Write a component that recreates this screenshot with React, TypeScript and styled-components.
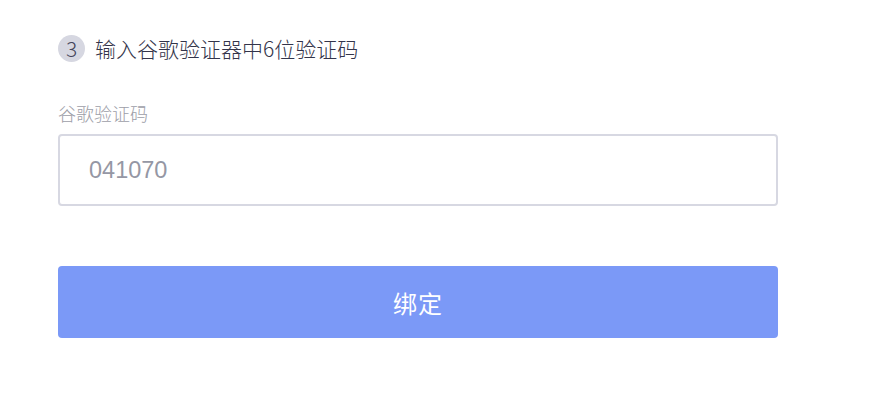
import React, { useState } from 'react';
import styled, { createGlobalStyle } from 'styled-components';

const GlobalStyle = createGlobalStyle`
  html, body {
    margin: 0;
    padding: 0;
    background: #fff;
    font-family: "Noto Sans CJK SC", "Noto Sans", sans-serif;
  }
`;

const Page = styled.div`
  width: 874px;
  height: 395px;
  box-sizing: border-box;
  padding: 34px 0 0 58px;
`;

const Step = styled.div`
  display: flex;
  align-items: center;
  gap: 10px;
  height: 28px;
`;

const StepNum = styled.span`
  width: 27px;
  height: 27px;
  border-radius: 50%;
  background: #d6d7e1;
  color: #44455a;
  font-size: 21px;
  font-weight: 300;
  line-height: 1;
  display: flex;
  align-items: center;
  justify-content: center;
`;

const StepText = styled.span`
  font-size: 21px;
  font-weight: 300;
  color: #33344a;
`;

const Field = styled.div`
  margin-top: 40px;
  width: 720px;
  display: flex;
  flex-direction: column;
`;

const Label = styled.label`
  font-size: 18px;
  font-weight: 300;
  line-height: 22px;
  color: #9d9ea8;
  margin-bottom: 10px;
`;

const Input = styled.input`
  box-sizing: border-box;
  width: 720px;
  height: 72px;
  border: 2px solid #d7d8e2;
  border-radius: 4px;
  padding: 0 29px;
  font-family: "Liberation Sans", Arial, sans-serif;
  font-size: 23.5px;
  color: #9597a4;
  outline: none;
`;

const Button = styled.button`
  margin-top: 60px;
  width: 720px;
  height: 72px;
  border: none;
  border-radius: 4px;
  background: #7b99f7;
  color: #fff;
  font-family: "Noto Sans CJK SC", sans-serif;
  font-size: 24px;
  letter-spacing: 1px;
  cursor: pointer;
`;

export default function App() {
  const [code, setCode] = useState('041070');

  return (
    <>
      <GlobalStyle />
      <Page>
        <Step>
          <StepNum>3</StepNum>
          <StepText>输入谷歌验证器中6位验证码</StepText>
        </Step>
        <Field>
          <Label>谷歌验证码</Label>
          <Input value={code} onChange={(e) => setCode(e.target.value)} />
        </Field>
        <Button>绑定</Button>
      </Page>
    </>
  );
}
